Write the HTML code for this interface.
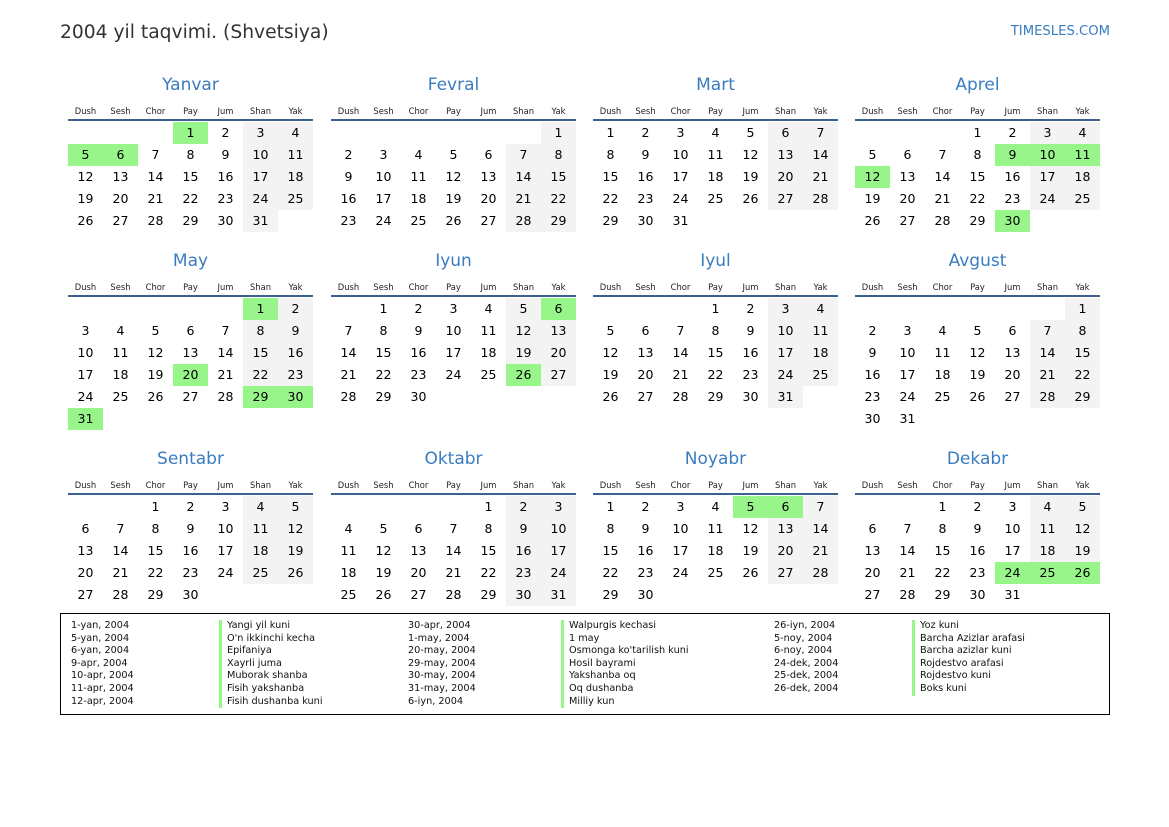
<!DOCTYPE html>
<html><head><meta charset="utf-8"><style>
body{margin:0;width:1169px;height:827px;background:#fff;font-family:"DejaVu Sans","Liberation Sans",sans-serif;color:#000;position:relative;overflow:hidden}
.h1{position:absolute;left:60px;top:20px;font-size:18.7px;color:#333;line-height:26px}
.logo{position:absolute;right:59px;top:23px;font-size:13.2px;color:#3a7cc0;line-height:18px}
.m{position:absolute;width:245px}
.t{height:20px;line-height:20px;font-size:17px;color:#3a7cc0;text-align:center}
.wd{margin-top:8px;height:16px;line-height:16px;border-bottom:2px solid #3b5f8f;display:flex}
.wd span{width:35px;text-align:center;font-size:8.4px;color:#222}
table{border-collapse:collapse;table-layout:fixed;width:245px;margin-top:1px}
td{width:35px;height:22px;padding:0;text-align:center;font-size:12.5px;line-height:22px}
td.w{background:#f3f3f3}
td.h{background:#98f58a}
.leg{position:absolute;left:60px;top:613px;width:1048px;height:100px;border:1px solid #000}
.c{position:absolute;top:6px;font-size:9.7px;line-height:12.6px;color:#111}
.b{border-left:3px solid #98f58a;padding-left:5px}
</style></head><body>
<div class="h1">2004 yil taqvimi. (Shvetsiya)</div>
<div class="logo">TIMESLES.COM</div>

<div class="m" style="left:68px;top:75px"><div class="t">Yanvar</div><div class="wd"><span>Dush</span><span>Sesh</span><span>Chor</span><span>Pay</span><span>Jum</span><span>Shan</span><span>Yak</span></div><table>
<tr><td></td><td></td><td></td><td class="h">1</td><td>2</td><td class="w">3</td><td class="w">4</td></tr>
<tr><td class="h">5</td><td class="h">6</td><td>7</td><td>8</td><td>9</td><td class="w">10</td><td class="w">11</td></tr>
<tr><td>12</td><td>13</td><td>14</td><td>15</td><td>16</td><td class="w">17</td><td class="w">18</td></tr>
<tr><td>19</td><td>20</td><td>21</td><td>22</td><td>23</td><td class="w">24</td><td class="w">25</td></tr>
<tr><td>26</td><td>27</td><td>28</td><td>29</td><td>30</td><td class="w">31</td><td></td></tr></table></div>

<div class="m" style="left:331px;top:75px"><div class="t">Fevral</div><div class="wd"><span>Dush</span><span>Sesh</span><span>Chor</span><span>Pay</span><span>Jum</span><span>Shan</span><span>Yak</span></div><table>
<tr><td></td><td></td><td></td><td></td><td></td><td></td><td class="w">1</td></tr>
<tr><td>2</td><td>3</td><td>4</td><td>5</td><td>6</td><td class="w">7</td><td class="w">8</td></tr>
<tr><td>9</td><td>10</td><td>11</td><td>12</td><td>13</td><td class="w">14</td><td class="w">15</td></tr>
<tr><td>16</td><td>17</td><td>18</td><td>19</td><td>20</td><td class="w">21</td><td class="w">22</td></tr>
<tr><td>23</td><td>24</td><td>25</td><td>26</td><td>27</td><td class="w">28</td><td class="w">29</td></tr></table></div>

<div class="m" style="left:593px;top:75px"><div class="t">Mart</div><div class="wd"><span>Dush</span><span>Sesh</span><span>Chor</span><span>Pay</span><span>Jum</span><span>Shan</span><span>Yak</span></div><table>
<tr><td>1</td><td>2</td><td>3</td><td>4</td><td>5</td><td class="w">6</td><td class="w">7</td></tr>
<tr><td>8</td><td>9</td><td>10</td><td>11</td><td>12</td><td class="w">13</td><td class="w">14</td></tr>
<tr><td>15</td><td>16</td><td>17</td><td>18</td><td>19</td><td class="w">20</td><td class="w">21</td></tr>
<tr><td>22</td><td>23</td><td>24</td><td>25</td><td>26</td><td class="w">27</td><td class="w">28</td></tr>
<tr><td>29</td><td>30</td><td>31</td><td></td><td></td><td></td><td></td></tr></table></div>

<div class="m" style="left:855px;top:75px"><div class="t">Aprel</div><div class="wd"><span>Dush</span><span>Sesh</span><span>Chor</span><span>Pay</span><span>Jum</span><span>Shan</span><span>Yak</span></div><table>
<tr><td></td><td></td><td></td><td>1</td><td>2</td><td class="w">3</td><td class="w">4</td></tr>
<tr><td>5</td><td>6</td><td>7</td><td>8</td><td class="h">9</td><td class="h">10</td><td class="h">11</td></tr>
<tr><td class="h">12</td><td>13</td><td>14</td><td>15</td><td>16</td><td class="w">17</td><td class="w">18</td></tr>
<tr><td>19</td><td>20</td><td>21</td><td>22</td><td>23</td><td class="w">24</td><td class="w">25</td></tr>
<tr><td>26</td><td>27</td><td>28</td><td>29</td><td class="h">30</td><td></td><td></td></tr></table></div>

<div class="m" style="left:68px;top:251px"><div class="t">May</div><div class="wd"><span>Dush</span><span>Sesh</span><span>Chor</span><span>Pay</span><span>Jum</span><span>Shan</span><span>Yak</span></div><table>
<tr><td></td><td></td><td></td><td></td><td></td><td class="h">1</td><td class="w">2</td></tr>
<tr><td>3</td><td>4</td><td>5</td><td>6</td><td>7</td><td class="w">8</td><td class="w">9</td></tr>
<tr><td>10</td><td>11</td><td>12</td><td>13</td><td>14</td><td class="w">15</td><td class="w">16</td></tr>
<tr><td>17</td><td>18</td><td>19</td><td class="h">20</td><td>21</td><td class="w">22</td><td class="w">23</td></tr>
<tr><td>24</td><td>25</td><td>26</td><td>27</td><td>28</td><td class="h">29</td><td class="h">30</td></tr>
<tr><td class="h">31</td><td></td><td></td><td></td><td></td><td></td><td></td></tr></table></div>

<div class="m" style="left:331px;top:251px"><div class="t">Iyun</div><div class="wd"><span>Dush</span><span>Sesh</span><span>Chor</span><span>Pay</span><span>Jum</span><span>Shan</span><span>Yak</span></div><table>
<tr><td></td><td>1</td><td>2</td><td>3</td><td>4</td><td class="w">5</td><td class="h">6</td></tr>
<tr><td>7</td><td>8</td><td>9</td><td>10</td><td>11</td><td class="w">12</td><td class="w">13</td></tr>
<tr><td>14</td><td>15</td><td>16</td><td>17</td><td>18</td><td class="w">19</td><td class="w">20</td></tr>
<tr><td>21</td><td>22</td><td>23</td><td>24</td><td>25</td><td class="h">26</td><td class="w">27</td></tr>
<tr><td>28</td><td>29</td><td>30</td><td></td><td></td><td></td><td></td></tr></table></div>

<div class="m" style="left:593px;top:251px"><div class="t">Iyul</div><div class="wd"><span>Dush</span><span>Sesh</span><span>Chor</span><span>Pay</span><span>Jum</span><span>Shan</span><span>Yak</span></div><table>
<tr><td></td><td></td><td></td><td>1</td><td>2</td><td class="w">3</td><td class="w">4</td></tr>
<tr><td>5</td><td>6</td><td>7</td><td>8</td><td>9</td><td class="w">10</td><td class="w">11</td></tr>
<tr><td>12</td><td>13</td><td>14</td><td>15</td><td>16</td><td class="w">17</td><td class="w">18</td></tr>
<tr><td>19</td><td>20</td><td>21</td><td>22</td><td>23</td><td class="w">24</td><td class="w">25</td></tr>
<tr><td>26</td><td>27</td><td>28</td><td>29</td><td>30</td><td class="w">31</td><td></td></tr></table></div>

<div class="m" style="left:855px;top:251px"><div class="t">Avgust</div><div class="wd"><span>Dush</span><span>Sesh</span><span>Chor</span><span>Pay</span><span>Jum</span><span>Shan</span><span>Yak</span></div><table>
<tr><td></td><td></td><td></td><td></td><td></td><td></td><td class="w">1</td></tr>
<tr><td>2</td><td>3</td><td>4</td><td>5</td><td>6</td><td class="w">7</td><td class="w">8</td></tr>
<tr><td>9</td><td>10</td><td>11</td><td>12</td><td>13</td><td class="w">14</td><td class="w">15</td></tr>
<tr><td>16</td><td>17</td><td>18</td><td>19</td><td>20</td><td class="w">21</td><td class="w">22</td></tr>
<tr><td>23</td><td>24</td><td>25</td><td>26</td><td>27</td><td class="w">28</td><td class="w">29</td></tr>
<tr><td>30</td><td>31</td><td></td><td></td><td></td><td></td><td></td></tr></table></div>

<div class="m" style="left:68px;top:449px"><div class="t">Sentabr</div><div class="wd"><span>Dush</span><span>Sesh</span><span>Chor</span><span>Pay</span><span>Jum</span><span>Shan</span><span>Yak</span></div><table>
<tr><td></td><td></td><td>1</td><td>2</td><td>3</td><td class="w">4</td><td class="w">5</td></tr>
<tr><td>6</td><td>7</td><td>8</td><td>9</td><td>10</td><td class="w">11</td><td class="w">12</td></tr>
<tr><td>13</td><td>14</td><td>15</td><td>16</td><td>17</td><td class="w">18</td><td class="w">19</td></tr>
<tr><td>20</td><td>21</td><td>22</td><td>23</td><td>24</td><td class="w">25</td><td class="w">26</td></tr>
<tr><td>27</td><td>28</td><td>29</td><td>30</td><td></td><td></td><td></td></tr></table></div>

<div class="m" style="left:331px;top:449px"><div class="t">Oktabr</div><div class="wd"><span>Dush</span><span>Sesh</span><span>Chor</span><span>Pay</span><span>Jum</span><span>Shan</span><span>Yak</span></div><table>
<tr><td></td><td></td><td></td><td></td><td>1</td><td class="w">2</td><td class="w">3</td></tr>
<tr><td>4</td><td>5</td><td>6</td><td>7</td><td>8</td><td class="w">9</td><td class="w">10</td></tr>
<tr><td>11</td><td>12</td><td>13</td><td>14</td><td>15</td><td class="w">16</td><td class="w">17</td></tr>
<tr><td>18</td><td>19</td><td>20</td><td>21</td><td>22</td><td class="w">23</td><td class="w">24</td></tr>
<tr><td>25</td><td>26</td><td>27</td><td>28</td><td>29</td><td class="w">30</td><td class="w">31</td></tr></table></div>

<div class="m" style="left:593px;top:449px"><div class="t">Noyabr</div><div class="wd"><span>Dush</span><span>Sesh</span><span>Chor</span><span>Pay</span><span>Jum</span><span>Shan</span><span>Yak</span></div><table>
<tr><td>1</td><td>2</td><td>3</td><td>4</td><td class="h">5</td><td class="h">6</td><td class="w">7</td></tr>
<tr><td>8</td><td>9</td><td>10</td><td>11</td><td>12</td><td class="w">13</td><td class="w">14</td></tr>
<tr><td>15</td><td>16</td><td>17</td><td>18</td><td>19</td><td class="w">20</td><td class="w">21</td></tr>
<tr><td>22</td><td>23</td><td>24</td><td>25</td><td>26</td><td class="w">27</td><td class="w">28</td></tr>
<tr><td>29</td><td>30</td><td></td><td></td><td></td><td></td><td></td></tr></table></div>

<div class="m" style="left:855px;top:449px"><div class="t">Dekabr</div><div class="wd"><span>Dush</span><span>Sesh</span><span>Chor</span><span>Pay</span><span>Jum</span><span>Shan</span><span>Yak</span></div><table>
<tr><td></td><td></td><td>1</td><td>2</td><td>3</td><td class="w">4</td><td class="w">5</td></tr>
<tr><td>6</td><td>7</td><td>8</td><td>9</td><td>10</td><td class="w">11</td><td class="w">12</td></tr>
<tr><td>13</td><td>14</td><td>15</td><td>16</td><td>17</td><td class="w">18</td><td class="w">19</td></tr>
<tr><td>20</td><td>21</td><td>22</td><td>23</td><td class="h">24</td><td class="h">25</td><td class="h">26</td></tr>
<tr><td>27</td><td>28</td><td>29</td><td>30</td><td>31</td><td></td><td></td></tr></table></div>

<div class="leg">
<div class="c" style="left:10px">1-yan, 2004<br>5-yan, 2004<br>6-yan, 2004<br>9-apr, 2004<br>10-apr, 2004<br>11-apr, 2004<br>12-apr, 2004</div>
<div class="c b" style="left:158px">Yangi yil kuni<br>O'n ikkinchi kecha<br>Epifaniya<br>Xayrli juma<br>Muborak shanba<br>Fisih yakshanba<br>Fisih dushanba kuni</div>
<div class="c" style="left:347px">30-apr, 2004<br>1-may, 2004<br>20-may, 2004<br>29-may, 2004<br>30-may, 2004<br>31-may, 2004<br>6-iyn, 2004</div>
<div class="c b" style="left:500px">Walpurgis kechasi<br>1 may<br>Osmonga ko'tarilish kuni<br>Hosil bayrami<br>Yakshanba oq<br>Oq dushanba<br>Milliy kun</div>
<div class="c" style="left:713px">26-iyn, 2004<br>5-noy, 2004<br>6-noy, 2004<br>24-dek, 2004<br>25-dek, 2004<br>26-dek, 2004</div>
<div class="c b" style="left:851px">Yoz kuni<br>Barcha Azizlar arafasi<br>Barcha azizlar kuni<br>Rojdestvo arafasi<br>Rojdestvo kuni<br>Boks kuni</div>
</div>
</body></html>
